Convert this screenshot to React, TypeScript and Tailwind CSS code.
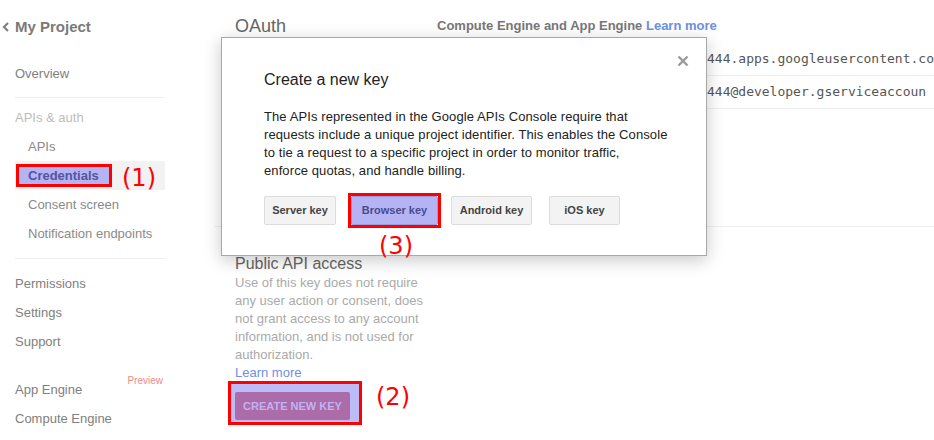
import React from 'react';

const SANS = "font-['Liberation_Sans',Arial,sans-serif]";

const NavItem: React.FC<{ label: string; indent?: boolean; muted?: boolean }> = ({ label, indent, muted }) => (
  <div className={`h-[29px] leading-[29px] text-[13px] ${indent ? 'pl-[13px] text-[#8a8a8a]' : 'text-[#808080]'} ${muted ? 'text-[#bdbdbd]' : ''}`}>
    {label}
  </div>
);

const Sidebar: React.FC = () => (
  <div className="w-[165px] shrink-0">
    <div className="h-[54px] flex items-center">
      <svg width="15" height="12" viewBox="0 0 15 12" className="shrink-0">
        <polyline points="8,2 4,6 8,10" fill="none" stroke="#808080" strokeWidth="2.2" />
      </svg>
      <span className="text-[15px] font-bold text-[#7a7a7a]">My Project</span>
    </div>
    <div className="pl-[15px]">
      <div className="mt-[5px]">
        <NavItem label="Overview" />
      </div>
      <div className="mt-[9px] h-px bg-[#eeeeee]" />
      <div className="mt-[5px]">
        <NavItem label="APIs & auth" muted />
      </div>
      <NavItem label="APIs" indent />
      <div className="h-[29px] bg-[#f2f2f2] flex items-center">
        <div className="ml-px h-[23px] w-[96px] border-[3px] border-[#ff0000] bg-[#b4b4f4] flex items-center pl-[9px]">
          <span className="text-[13px] font-bold text-[#55559c]">Credentials</span>
        </div>
      </div>
      <NavItem label="Consent screen" indent />
      <NavItem label="Notification endpoints" indent />
      <div className="mt-[10px] h-px bg-[#eeeeee]" />
      <div className="mt-[10px]">
        <NavItem label="Permissions" />
        <NavItem label="Settings" />
        <NavItem label="Support" />
      </div>
      <div className="mt-[19px] flex justify-between pr-[2px]">
        <NavItem label="App Engine" />
        <span className="text-[10px] leading-[12px] text-[#f08a8a]">Preview</span>
      </div>
      <NavItem label="Compute Engine" />
    </div>
  </div>
);

const KeyButton: React.FC<{ label: string; width: string; active?: boolean; className?: string }> = ({ label, width, active, className }) => (
  <button
    className={`${width} h-[29px] rounded-[2px] border text-[11px] font-bold ${
      active ? 'bg-[#b4b4f4] border-[#9a9ae0] text-[#4a4a90]' : 'bg-[#f3f3f3] border-[#dcdcdc] text-[#444444]'
    } ${className ?? ''}`}
  >
    {label}
  </button>
);

const Modal: React.FC = () => (
  <div className="absolute left-[221px] top-[37px] w-[486px] h-[219px] bg-white border border-[#a8a8a8] shadow-[0_4px_16px_rgba(0,0,0,0.22)]">
    <svg width="12" height="12" viewBox="0 0 12 12" className="absolute right-[17px] top-[17px]">
      <path d="M1.5 1.5 L10.5 10.5 M10.5 1.5 L1.5 10.5" stroke="#9a9a9a" strokeWidth="2.4" />
    </svg>
    <div className="pl-[42px] pt-[32px]">
      <h2 className="text-[16px] leading-[20px] text-[#222222]">Create a new key</h2>
      <p className="mt-[18px] text-[13px] leading-[18px] text-[#222222] tracking-[0.1px]">
        The APIs represented in the Google APIs Console require that
        <br />
        requests include a unique project identifier. This enables the Console
        <br />
        to tie a request to a specific project in order to monitor traffic,
        <br />
        enforce quotas, and handle billing.
      </p>
      <div className="mt-[16px] flex items-center">
        <KeyButton label="Server key" width="w-[72px]" />
        {/* red annotation box round the picked button */}
        <div className="ml-[12px] -my-[3px] border-[3px] border-[#ff0000]">
          <KeyButton label="Browser key" width="w-[87px]" active className="block" />
        </div>
        <KeyButton label="Android key" width="w-[81px]" className="ml-[10px]" />
        <KeyButton label="iOS key" width="w-[71px]" className="ml-[17px]" />
      </div>
    </div>
  </div>
);

const Annotation: React.FC<{ text: string; className: string }> = ({ text, className }) => (
  <span className={`absolute text-[24px] leading-[28px] text-[#ff0000] font-['DejaVu_Sans',sans-serif] ${className}`}>{text}</span>
);

export default function App() {
  return (
    <div className={`relative w-[934px] h-[440px] overflow-hidden bg-white ${SANS}`}>
      <div className="flex">
        <Sidebar />
        <div className="flex-1 min-w-0 ml-[50px] pt-[16px]">
          <div className="flex pl-[20px]">
            <div className="w-[202px] text-[18px] leading-[20px] text-[#666666]">OAuth</div>
            <div className="flex-1 min-w-0">
              <div className="text-[13px] leading-[20px] font-bold text-[#777777]">
                Compute Engine and App Engine <span className="text-[#6d8fe4]">Learn more</span>
              </div>
              <div className="mt-[7px] font-['DejaVu_Sans_Mono',monospace] text-[13px] text-[#555555] whitespace-nowrap overflow-hidden">
                <div className="h-[33px] flex items-center pl-[270px] border-b border-[#eeeeee]">
                  444.apps.googleusercontent.co
                </div>
                <div className="h-[33px] flex items-center pl-[270px] border-b border-[#eeeeee]">
                  444@developer.gserviceaccoun
                </div>
              </div>
            </div>
          </div>
          <div className="mt-[117px] h-px bg-[#eeeeee]" />
          <div className="pl-[20px] pt-[27px]">
            <h3 className="text-[16px] leading-[20px] text-[#666666]">Public API access</h3>
            <p className="w-[204px] text-[13px] leading-[18px] text-[#aaaaaa]">
              Use of this key does not require any user action or consent, does not grant access to any account information, and is not used for authorization.
            </p>
            <div className="text-[13px] leading-[18px] text-[#6d8fe4]">Learn more</div>
            <div className="-mt-px -ml-[7px] w-[134px] border-[3px] border-[#ff0000] bg-[#bcbcf8] pt-[8px] pl-[4px] pr-[9px] pb-[2px]">
              <button className="w-[115px] h-[28px] rounded-[2px] bg-[#ab6ca9] text-[11px] font-bold text-[#c3b2f2]">
                CREATE NEW KEY
              </button>
            </div>
          </div>
        </div>
      </div>
      <Modal />
      <Annotation text="(1)" className="left-[122px] top-[164px]" />
      <Annotation text="(3)" className="left-[379px] top-[232px]" />
      <Annotation text="(2)" className="left-[376px] top-[383px]" />
    </div>
  );
}
